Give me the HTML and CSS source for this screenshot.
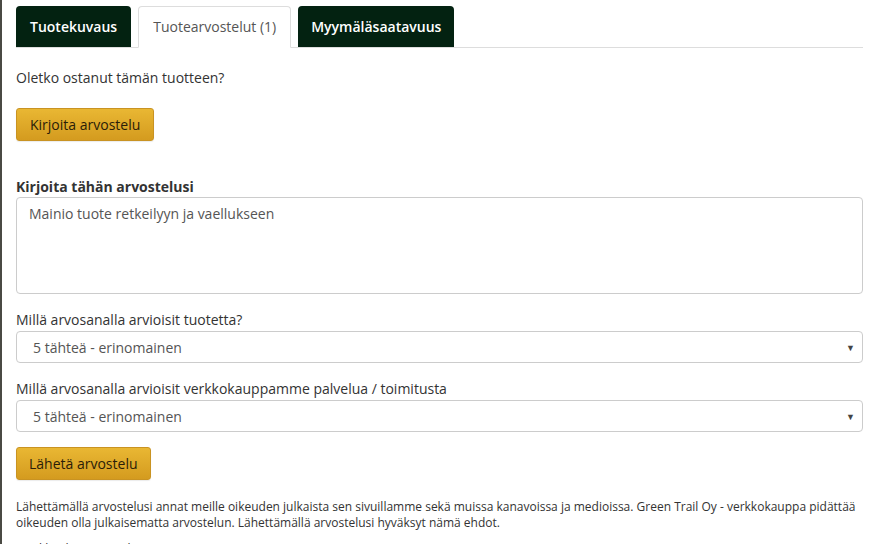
FILE: index.html
```html
<!DOCTYPE html>
<html lang="fi">
<head>
<meta charset="utf-8">
<link rel="stylesheet" href="styles.css">
</head>
<body>
<div class="edge"></div>
<div class="page">
  <ul class="tabs">
    <li class="tab dark">Tuotekuvaus</li>
    <li class="tab active">Tuotearvostelut (1)</li>
    <li class="tab dark last">Myymäläsaatavuus</li>
  </ul>
  <div class="pane">
    <p class="question">Oletko ostanut tämän tuotteen?</p>
    <button class="btn btn-write">Kirjoita arvostelu</button>
    <label class="bold-label">Kirjoita tähän arvostelusi</label>
    <div class="textarea">Mainio tuote retkeilyyn ja vaellukseen</div>
    <label class="field-label">Millä arvosanalla arvioisit tuotetta?</label>
    <div class="select"><span>5 tähteä - erinomainen</span><span class="caret">▼</span></div>
    <label class="field-label">Millä arvosanalla arvioisit verkkokauppamme palvelua / toimitusta</label>
    <div class="select"><span>5 tähteä - erinomainen</span><span class="caret">▼</span></div>
    <button class="btn btn-send">Lähetä arvostelu</button>
    <p class="terms">Lähettämällä arvostelusi annat meille oikeuden julkaista sen sivuillamme sekä muissa kanavoissa ja medioissa. Green Trail Oy - verkkokauppa pidättää oikeuden olla julkaisematta arvostelun. Lähettämällä arvostelusi hyväksyt nämä ehdot.</p>
    <p class="terms next">Asiakkaiden arvostelut tuotteesta</p>
  </div>
</div>
</body>
</html>
```
FILE: styles.css
```css
html, body {
  margin: 0;
  padding: 0;
  background: #fff;
  height: 544px;
  overflow: hidden;
}
body {
  font-family: "Open Sans", "Liberation Sans", sans-serif;
  font-size: 14px;
  color: #333;
  display: flex;
}
.edge {
  width: 2px;
  background: #4a4a44;
  flex: none;
}
.page {
  padding: 6px 0 0 14px;
  width: 847px;
}
.tabs {
  list-style: none;
  margin: 0;
  padding: 0;
  display: flex;
  gap: 7px;
  border-bottom: 1px solid #ddd;
  height: 41px;
}
.tab {
  height: 41px;
  line-height: 41px;
  padding: 0 14px;
  border-radius: 4px 4px 0 0;
  box-sizing: border-box;
}
.tab.dark {
  background: #032211;
  color: #fff;
  font-weight: 600;
  padding: 0 14px;
}
.tab.dark.last {
  padding: 0 13px;
}
.tab.active {
  background: #fff;
  border: 1px solid #ddd;
  border-bottom-color: #fff;
  height: 42px;
  line-height: 40px;
  color: #555;
}
.pane {
  display: flex;
  flex-direction: column;
  align-items: flex-start;
}
.question {
  margin: 20px 0 0;
  line-height: 20px;
}
.btn {
  font-family: inherit;
  font-size: 14px;
  color: #2b1d08;
  background: linear-gradient(#e9b733, #d49b1f);
  border: 1px solid #c99322;
  border-radius: 3px;
  height: 33px;
  padding: 0 13px;
  box-shadow: 0 1px 1px rgba(0,0,0,0.08);
}
.btn-write {
  margin-top: 20px;
}
.bold-label {
  font-weight: 700;
  margin-top: 36px;
  line-height: 20px;
}
.textarea {
  margin-top: 0;
  width: 847px;
  height: 97px;
  box-sizing: border-box;
  border: 1px solid #ccc;
  border-radius: 4px;
  padding: 6px 12px;
  color: #555;
  line-height: 20px;
}
.field-label {
  margin-top: 16px;
  line-height: 20px;
}
.field-label + .select {
  margin-top: 1px;
}
.select {
  width: 847px;
  height: 32px;
  box-sizing: border-box;
  border: 1px solid #ccc;
  border-radius: 4px;
  padding: 0 7px 0 16px;
  color: #555;
  display: flex;
  justify-content: space-between;
  align-items: center;
}
.caret {
  font-size: 9px;
  color: #444;
}
.btn-send {
  margin-top: 15px;
  padding: 0 12px;
}
.terms {
  margin: 19px 0 0;
  font-size: 12px;
  line-height: 16px;
  color: #333;
}
.terms.next {
  margin-top: 10px;
}
```
